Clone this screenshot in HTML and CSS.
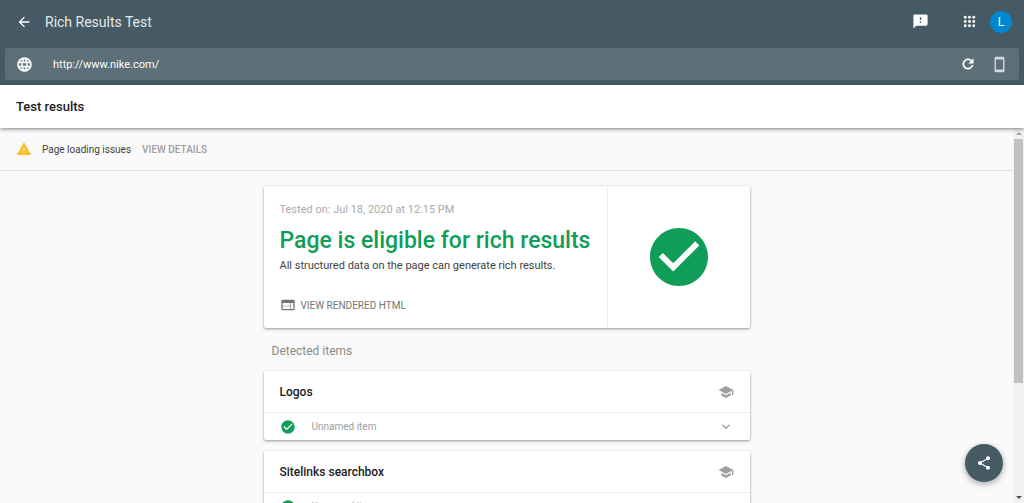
FILE: index.html
```html
<!DOCTYPE html>
<html lang="en">
  <head>
    <meta charset="UTF-8" />
    <meta name="viewport" content="width=device-width, initial-scale=1.0" />
    <title>Rich Results Test</title>
    <link rel="stylesheet" href="styles.css">
  </head>
  <body>
    <!-- shared icons -->
    <svg class="sprite" aria-hidden="true">
      <symbol id="check" viewBox="0 0 24 24">
        <path d="M12 2C6.48 2 2 6.48 2 12s4.48 10 10 10 10-4.48 10-10S17.52 2 12 2zm-2 15l-5-5 1.41-1.41L10 14.17l7.59-7.59L19 8l-9 9z" />
      </symbol>
      <symbol id="school" viewBox="0 0 24 24">
        <path d="M5 13.18v4L12 21l7-3.82v-4L12 17l-7-3.82zM12 3L1 9l11 6 9-4.91V17h2V9L12 3z" />
      </symbol>
      <symbol id="chevron" viewBox="0 0 24 24">
        <path d="M7.41 7.84L12 12.42l4.59-4.58L18 9.25l-6 6-6-6z" />
      </symbol>
    </svg>

    <header>
      <div class="app-bar">
        <button class="icon-btn" aria-label="Back">
          <svg class="icon-md" viewBox="0 0 24 24"><path d="M20 11H7.83l5.59-5.59L12 4l-8 8 8 8 1.41-1.41L7.83 13H20v-2z" /></svg>
        </button>
        <h1>Rich Results Test</h1>
        <div class="app-actions">
          <button class="icon-btn" aria-label="Send feedback">
            <svg class="icon-lg" viewBox="0 0 24 24"><path d="M20 2H4c-1.1 0-1.99.9-1.99 2L2 22l4-4h14c1.1 0 2-.9 2-2V4c0-1.1-.9-2-2-2zm-7 12h-2v-2h2v2zm0-4h-2V6h2v4z" /></svg>
          </button>
          <button class="icon-btn apps" aria-label="Google apps">
            <svg class="icon-lg" viewBox="0 0 24 24">
              <circle cx="6" cy="6" r="2" /><circle cx="12" cy="6" r="2" /><circle cx="18" cy="6" r="2" />
              <circle cx="6" cy="12" r="2" /><circle cx="12" cy="12" r="2" /><circle cx="18" cy="12" r="2" />
              <circle cx="6" cy="18" r="2" /><circle cx="12" cy="18" r="2" /><circle cx="18" cy="18" r="2" />
            </svg>
          </button>
          <button class="avatar" aria-label="Account">L</button>
        </div>
      </div>
      <form class="url-bar">
        <svg class="icon-lg" viewBox="0 0 24 24"><path stroke="currentColor" stroke-width="0.5" d="M11.99 2C6.47 2 2 6.48 2 12s4.47 10 9.99 10C17.52 22 22 17.52 22 12S17.52 2 11.99 2zm6.93 6h-2.95c-.32-1.25-.78-2.45-1.38-3.56 1.84.63 3.37 1.91 4.33 3.56zM12 4.04c.83 1.2 1.48 2.53 1.91 3.96h-3.82c.43-1.43 1.08-2.76 1.91-3.96zM4.26 14C4.1 13.36 4 12.69 4 12s.1-1.36.26-2h3.38c-.08.66-.14 1.32-.14 2s.06 1.34.14 2H4.26zm.82 2h2.95c.32 1.25.78 2.45 1.38 3.56-1.84-.63-3.37-1.9-4.33-3.56zm2.95-8H5.08c.96-1.66 2.49-2.93 4.33-3.56C8.81 5.55 8.35 6.75 8.03 8zM12 19.96c-.83-1.2-1.48-2.53-1.91-3.96h3.82c-.43 1.43-1.08 2.76-1.91 3.96zM14.34 14H9.66c-.09-.66-.16-1.32-.16-2s.07-1.35.16-2h4.68c.09.65.16 1.32.16 2s-.07 1.34-.16 2zm.25 5.56c.6-1.11 1.06-2.31 1.38-3.56h2.95c-.96 1.65-2.49 2.93-4.33 3.56zM16.36 14c.08-.66.14-1.32.14-2s-.06-1.34-.14-2h3.38c.16.64.26 1.31.26 2s-.1 1.36-.26 2h-3.38z" /></svg>
        <input type="text" aria-label="URL to test" value="http://www.nike.com/" />
        <button type="button" class="icon-btn" aria-label="Test again">
          <svg class="icon-md" viewBox="0 0 24 24"><path stroke="currentColor" stroke-width="0.6" d="M17.65 6.35C16.2 4.9 14.21 4 12 4c-4.42 0-7.99 3.58-7.99 8s3.57 8 7.99 8c3.73 0 6.84-2.55 7.73-6h-2.08c-.82 2.33-3.04 4-5.65 4-3.31 0-6-2.69-6-6s2.69-6 6-6c1.66 0 3.14.69 4.22 1.78L13 11h7V4l-2.35 2.35z" /></svg>
        </button>
        <button type="button" class="icon-btn device" aria-label="Smartphone">
          <svg class="icon-lg" viewBox="0 0 24 24"><path d="M17 1.01L7 1c-1.1 0-2 .9-2 2v18c0 1.1.9 2 2 2h10c1.1 0 2-.9 2-2V3c0-1.1-.9-1.99-2-1.99zM17 19H7V5h10v14z" /></svg>
        </button>
      </form>
    </header>

    <div class="page-title">
      <h2>Test results</h2>
    </div>

    <div class="viewport">
      <main>
        <div class="issues">
          <svg class="icon-warn" viewBox="0 0 24 24"><path d="M1 21h22L12 2 1 21zm12-3h-2v-2h2v2zm0-4h-2v-4h2v4z" /></svg>
          <span>Page loading issues</span>
          <button class="details-btn">VIEW DETAILS</button>
        </div>

        <div class="container">
          <section class="card result">
            <div class="result-text">
              <p class="tested">Tested on: Jul 18, 2020 at 12:15 PM</p>
              <h3>Page is eligible for rich results</h3>
              <p class="summary">All structured data on the page can generate rich results.</p>
              <button class="html-btn">
                <svg class="icon-md" viewBox="0 0 24 24"><path d="M20 4H4c-1.1 0-1.99.9-1.99 2L2 18c0 1.1.9 2 2 2h16c1.1 0 2-.9 2-2V6c0-1.1-.9-2-2-2zm-5 14H4v-4h11v4zm0-5H4V9h11v4zm5 5h-4V9h4v9z" /></svg>
                VIEW RENDERED HTML
              </button>
            </div>
            <div class="result-status">
              <svg class="big-check" viewBox="2 2 20 20"><use href="#check" width="24" height="24" /></svg>
            </div>
          </section>

          <h4>Detected items</h4>

          <section class="card">
            <div class="card-head">
              <h5>Logos</h5>
              <svg class="icon-md"><use href="#school" /></svg>
            </div>
            <button class="item">
              <svg class="icon-md ok"><use href="#check" /></svg>
              <span>Unnamed item</span>
              <svg class="icon-md"><use href="#chevron" /></svg>
            </button>
          </section>

          <section class="card">
            <div class="card-head">
              <h5>Sitelinks searchbox</h5>
              <svg class="icon-md"><use href="#school" /></svg>
            </div>
            <button class="item">
              <svg class="icon-md ok"><use href="#check" /></svg>
              <span>Unnamed item</span>
              <svg class="icon-md"><use href="#chevron" /></svg>
            </button>
          </section>
        </div>
      </main>

      <div class="scrollbar" aria-hidden="true">
        <span class="arrow up"></span>
        <div class="track"><div class="thumb"></div></div>
        <span class="arrow down"></span>
      </div>
    </div>

    <button class="fab" aria-label="Share">
      <svg class="icon-md" viewBox="0 0 24 24"><path d="M18 16.08c-.76 0-1.44.3-1.96.77L8.91 12.7c.05-.23.09-.46.09-.7s-.04-.47-.09-.7l7.05-4.11c.54.5 1.25.81 2.04.81 1.66 0 3-1.34 3-3s-1.34-3-3-3-3 1.34-3 3c0 .24.04.47.09.7L8.04 9.81C7.5 9.31 6.79 9 6 9c-1.66 0-3 1.34-3 3s1.34 3 3 3c.79 0 1.5-.31 2.04-.81l7.12 4.16c-.05.21-.08.43-.08.65 0 1.61 1.31 2.92 2.92 2.92 1.61 0 2.92-1.31 2.92-2.92s-1.31-2.92-2.92-2.92z" /></svg>
    </button>
  </body>
</html>
```

FILE: styles.css
```css
* {
  box-sizing: border-box;
}
body {
  font-family: Roboto, "Liberation Sans", sans-serif;
  font-size: 11px;
  background: #fafafa;
  color: #424242;
  margin: 0;
  height: 100vh;
  display: flex;
  flex-direction: column;
  overflow: hidden;
}
h1,
h2,
h3,
h4,
h5,
p {
  margin: 0;
}
button,
input {
  font: inherit;
  color: inherit;
  background: none;
  border: none;
  padding: 0;
}
button {
  cursor: pointer;
}
svg {
  fill: currentColor;
  flex: none;
}
.sprite {
  position: absolute;
  width: 0;
  height: 0;
}
.icon-md {
  width: 16px;
  height: 16px;
}
.icon-lg {
  width: 17px;
  height: 17px;
}
.icon-btn {
  display: flex;
}

/* header */
header {
  background: #455a64;
  color: white;
  padding: 0 5px 5px;
}
.app-bar {
  display: flex;
  align-items: center;
  height: 48px;
  padding: 0 7px 5px 11px;
}
.app-bar h1 {
  margin-left: 13px;
  font-size: 14px;
  font-weight: 400;
  color: #e3e7e9;
}
.app-actions {
  display: flex;
  align-items: center;
  margin-left: auto;
}
.apps {
  margin: 0 12px 0 32px;
}
.avatar {
  width: 22px;
  height: 22px;
  border-radius: 50%;
  background: #0288d1;
  font-size: 12px;
}
.url-bar {
  display: flex;
  align-items: center;
  height: 32px;
  padding: 0 11px;
  background: #5d6f78;
  border-radius: 2px;
}
.url-bar input {
  flex: 1;
  min-width: 0;
  margin-left: 20px;
  outline: none;
}
.device {
  margin-left: 15px;
  color: #d2d8db;
}

.page-title {
  display: flex;
  align-items: center;
  height: 43px;
  padding: 0 16px;
  background: white;
  box-shadow: 0 1px 4px rgba(0, 0, 0, 0.5);
  z-index: 1;
}
.page-title h2 {
  font-size: 13px;
  font-weight: 500;
  color: #212121;
}

/* results */
.viewport {
  flex: 1;
  display: flex;
  min-height: 0;
}
main {
  flex: 1;
  overflow: hidden;
}
.issues {
  display: flex;
  align-items: center;
  height: 43px;
  padding: 0 16px;
  font-size: 10px;
  border-bottom: 1px solid #e0e0e0;
}
.icon-warn {
  width: 16px;
  height: 16px;
  margin-right: 10px;
  color: #fbc02d;
}
.details-btn {
  margin-left: 11px;
  font-weight: 500;
  color: #9e9e9e;
}
.container {
  max-width: 486px;
  margin: 0 auto;
  padding: 15px 0;
}
.card {
  margin-bottom: 11px;
  background: white;
  border-radius: 2px;
  box-shadow: 0 1px 3px rgba(0, 0, 0, 0.4);
}
.result {
  display: flex;
}
.result-text {
  flex: 1;
  padding: 17px 16px 15px;
}
.tested {
  line-height: 14px;
  color: #aaa;
}
.result h3 {
  margin: 8px 0 2px;
  font-size: 23px;
  line-height: 32px;
  font-weight: 500;
  color: #0f9d58;
}
.summary {
  line-height: 14px;
}
.html-btn {
  display: flex;
  align-items: center;
  gap: 5px;
  margin-top: 24px;
  font-size: 10px;
  color: #757575;
}
.result-status {
  display: flex;
  align-items: center;
  justify-content: center;
  width: 143px;
  border-left: 1px solid #eee;
}
.big-check {
  width: 58px;
  height: 58px;
  color: #0f9d58;
}
.container h4 {
  padding: 4px 8px 12px;
  font-size: 12px;
  line-height: 16px;
  font-weight: 400;
  color: #8a8a8a;
}
.card-head {
  display: flex;
  align-items: center;
  justify-content: space-between;
  height: 42px;
  padding: 0 16px;
  border-bottom: 1px solid #eee;
  color: #9e9e9e;
}
.card-head h5 {
  font-size: 12px;
  font-weight: 500;
  color: #212121;
}
.item {
  display: flex;
  align-items: center;
  width: 100%;
  height: 27px;
  padding: 0 16px;
  font-size: 10px;
  color: #9e9e9e;
}
.item span {
  flex: 1;
  margin-left: 16px;
  text-align: left;
}
.ok {
  color: #0f9d58;
}

/* scrollbar */
.scrollbar {
  display: flex;
  flex-direction: column;
  align-items: center;
  width: 11px;
  padding: 4px 0;
  background: #f1f1f1;
}
.arrow {
  border: 3px solid transparent;
}
.up {
  border-top: none;
  border-bottom-color: #a3a3a3;
}
.down {
  border-bottom: none;
  border-top-color: #505050;
}
.track {
  flex: 1;
  width: 9px;
  margin: 4px 0;
}
.thumb {
  height: 69%;
  background: #c1c1c1;
}

.fab {
  position: fixed;
  right: 21px;
  bottom: 21px;
  display: flex;
  align-items: center;
  justify-content: center;
  width: 38px;
  height: 38px;
  border-radius: 50%;
  background: #455a64;
  color: white;
  box-shadow: 0 2px 6px rgba(0, 0, 0, 0.35);
}
```
